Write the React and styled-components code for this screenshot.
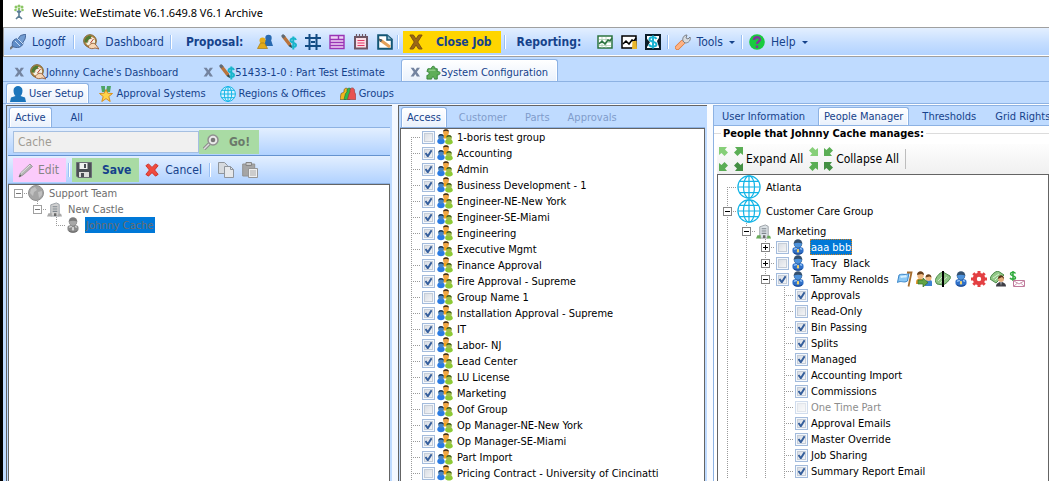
import React, { useState } from "react";
import styled, { createGlobalStyle, css } from "styled-components";

const GlobalStyle = createGlobalStyle`
  * {
    box-sizing: border-box;
  }
  html, body, #root {
    height: 100%;
    margin: 0;
  }
  body {
    overflow: hidden;
  }
  body, button, input {
    font-family: "DejaVu Sans Condensed", "DejaVu Sans", sans-serif;
    font-size: 11px;
  }
  button {
    border: none;
    background: none;
    padding: 0;
    color: inherit;
    cursor: pointer;
  }
  svg {
    display: block;
    flex: none;
  }
`;

const Window = styled.div`
  display: flex;
  flex-direction: column;
  height: 100vh;
  border-left: 3px solid #000;
  background: #bfdbff;
  color: #15428b;
  overflow: hidden;
`;

const TitleBar = styled.header`
  flex: none;
  display: flex;
  align-items: center;
  gap: 5px;
  height: 27px;
  padding: 0 0 3px 8px;
  background: #fff;
  color: #000;
  font-family: "Noto Sans", "Open Sans", sans-serif;
  font-size: 11px;
`;

const Toolbar = styled.nav`
  flex: none;
  display: flex;
  align-items: center;
  height: 30px;
  padding-left: 6px;
  border-top: 1px solid #a0a0a0;
  border-bottom: 1px solid #a0a0a0;
  border-left: 1px solid #a0a0a0;
  box-shadow: inset 0 -1px #fff;
  background: linear-gradient(#e3efff, #c4ddff 55%, #b1d2ff);
  white-space: nowrap;
`;

const ToolButton = styled.button`
  flex: none;
  display: flex;
  align-items: center;
  gap: 6px;
  height: 22px;
  margin-right: ${(p) => p.$after || 0}px;
  font-size: 12px;
`;

const CloseJob = styled(ToolButton)`
  gap: 13px;
  padding: 0 9px 0 6px;
  background: #ffd500;
  font-weight: bold;
`;

const Heading = styled.span`
  flex: none;
  width: ${(p) => p.$width}px;
  padding-left: 8px;
  font-size: 12px;
  font-weight: bold;
`;

const IconGroup = styled.div`
  display: flex;
  gap: 8px;
`;

const Separator = styled.span`
  flex: none;
  width: 2px;
  height: 14px;
  margin: 0 ${(p) => p.$gap || 6}px;
  border-left: 1px solid #9ac0f3;
  border-right: 1px solid #fff;
`;

const Caret = styled.span`
  border: 3px solid transparent;
  border-top-color: #15428b;
  border-bottom: none;
`;

const activeTab = css`
  border: 1px solid #8db2e3;
  border-bottom: none;
  border-radius: 3px 3px 0 0;
  box-shadow: inset 1px 1px #fff, inset -1px 0 #fff;
  background: linear-gradient(#fff, #e9f1fc);
`;

const TabStrip = styled.div`
  flex: none;
  display: flex;
  align-items: flex-end;
  gap: ${(p) => p.$gap || 7}px;
  height: ${(p) => p.$height}px;
  padding-left: ${(p) => p.$start || 0}px;
  border-bottom: 1px solid #8db2e3;
  background: #bfdbff;
  white-space: nowrap;
  overflow: hidden;
`;

const Tab = styled.button`
  flex: none;
  display: flex;
  align-items: center;
  gap: 4px;
  height: calc(100% - 1px);
  padding: 0 5px;
  border: 1px solid transparent;
  border-bottom: none;
  color: #15428b;
  ${(p) => p.$active && activeTab}
  &:disabled {
    color: #7f9ccb;
    cursor: default;
  }
`;

const WideTab = styled(Tab)`
  padding-left: 11px;
`;

const PageTab = styled(Tab)`
  gap: 3px;
  padding: 0 4px 0 3px;
`;

const DocTab = styled(Tab)`
  gap: 0;
  height: 22px;
  padding: 3px 9px 0 8px;
`;

const DocClose = styled.span`
  margin-right: 6px;
`;

const Body = styled.main`
  flex: 1;
  min-height: 0;
  display: grid;
  grid-template-columns: 386fr 309fr 336fr;
  gap: 6px;
  margin-left: 3px;
  padding-top: 1px;
  background: linear-gradient(90deg, #edf4ff, #fff);
`;

const Panel = styled.section`
  display: flex;
  flex-direction: column;
  min-width: 0;
  min-height: 0;
  padding: 0 2px 0 1px;
  border-top: 1px solid #646464;
  border-left: 1px solid #646464;
  background: #bfdbff;
  overflow: hidden;
`;

const PeoplePanel = styled(Panel)`
  border-top-color: #8db2e3;
  border-left-color: #8db2e3;
  padding: 0;
  background: #fff;
`;

const SearchBar = styled.form`
  flex: none;
  display: flex;
  align-items: center;
  height: 28px;
  padding-left: 5px;
  border-bottom: 1px solid #6593cf;
  background: linear-gradient(#e3efff, #b1d2ff);
`;

const SearchInput = styled.input`
  width: 186px;
  height: 22px;
  padding: 0 4px;
  border: 1px solid #a5bfe1;
  background: #f0f0f0;
  color: #a09c94;
  font-size: 12px;
`;

const GoButton = styled(ToolButton)`
  gap: 10px;
  width: 60px;
  height: 24px;
  padding-left: 4px;
  background: #a9dba4;
  color: #6b7a6b;
  font-weight: bold;
`;

const EditBar = styled(SearchBar).attrs({ as: "div" })`
  border-color: #8db2e3;
`;

const EditButton = styled(ToolButton)`
  gap: 4px;
  height: 24px;
  padding: 0 7px 0 5px;
  background: #fbcbfb;
  color: #858585;
`;

const SaveButton = styled(ToolButton)`
  gap: 10px;
  height: 24px;
  padding: 0 8px 0 4px;
  background: #a9dba4;
  font-weight: bold;
`;

const Tree = styled.ul`
  flex: 1;
  min-height: 0;
  margin: 0;
  padding: 0 0 0 ${(p) => p.$left || 0}px;
  border: 1px solid #646464;
  border-bottom: none;
  background: #fff;
  color: ${(p) => (p.$dim ? "#6d6d6d" : "#000")};
  list-style: none;
  overflow: hidden;
`;

const Row = styled.li`
  display: flex;
  align-items: center;
  height: ${(p) => (p.$tall ? 24 : 16)}px;
  white-space: pre;
`;

const dots = "#9a9a9a 0 1px, transparent 1px 2px";

// one 19px indent step; $kind picks which dotted guides it shows
const Guide = styled.span`
  flex: none;
  display: flex;
  align-items: center;
  width: 19px;
  height: 100%;
  padding-left: 5px;
  background-repeat: no-repeat;
  background-image: repeating-linear-gradient(${dots}),
    repeating-linear-gradient(90deg, ${dots});
  background-position: 9px ${(p) => (p.$kind === "first" ? "100%" : "0")}, 9px 50%;
  background-size: 1px
      ${(p) => ({ line: "100%", tee: "100%", end: "50%", first: "50%" })[p.$kind] || "0"},
    ${(p) => (["tee", "end", "first", "solo"].includes(p.$kind) ? "10px" : "0")} 1px;
`;

const Expander = styled.button`
  display: block;
  width: 9px;
  height: 9px;
  background: #fff;
`;

const Check = styled.input`
  appearance: none;
  flex: none;
  width: 13px;
  height: 13px;
  margin: 0 2px 0 1px;
  border: 1px solid #a3bbdc;
  box-shadow: inset 0 0 0 1px #f4f8fd, inset 0 0 0 2px #c5cdd8;
  background: linear-gradient(135deg, #d3d8e0, #fafafa);
  &:checked {
    background: url("data:image/svg+xml,%3Csvg xmlns='http://www.w3.org/2000/svg' width='11' height='11'%3E%3Cpath d='M2.5 5l2.3 3.2L8.6 2.2' fill='none' stroke='%23365f9c' stroke-width='2'/%3E%3C/svg%3E"),
      linear-gradient(135deg, #d3d8e0, #fafafa);
  }
  &:disabled {
    opacity: 0.5;
  }
`;

const NodeLabel = styled.label`
  display: flex;
  align-items: center;
  height: 16px;
  margin-left: ${(p) => p.$gap || 0}px;
  padding: 0 1px;
  ${(p) => p.$muted && "color: #8d8d8d;"}
  ${(p) =>
    p.$selected &&
    css`
      background: #0078d7;
      color: ${p.$selected};
    `}
`;

const Focused = styled(NodeLabel)`
  outline: 1px dotted #d08020;
  outline-offset: -1px;
`;

const Badges = styled.span`
  display: flex;
  gap: 3px;
  margin-left: 7px;
`;

const PeopleBox = styled.fieldset`
  flex: 1;
  min-width: 0;
  min-height: 0;
  display: flex;
  flex-direction: column;
  margin: 0;
  padding: 3px 0 0 3px;
  border: none;
  border-top: 1px solid #dcdcdc;
`;

const Legend = styled.legend`
  margin-left: 4px;
  padding: 0 2px;
  color: #000;
  font-weight: bold;
  line-height: 15px;
`;

const PeopleTools = styled.div`
  flex: none;
  display: flex;
  align-items: center;
  gap: 6px;
  height: 30px;
  padding-left: 2px;
  background: linear-gradient(#fdfdfd, #f0f0f0);
  color: #000;
`;

const PeopleTool = styled(ToolButton)`
  gap: 3px;
`;

const Divider = styled.span`
  width: 1px;
  height: 20px;
  background: #bdbdbd;
`;

/* icons */

const Svg = ({ size = 16, children, ...rest }) => (
  <svg width={size} height={size} viewBox="0 0 16 16" fill="none" aria-hidden="true" {...rest}>
    {children}
  </svg>
);

const LogoIcon = () => (
  <Svg>
    <g fill="#8cc665">
      <circle cx="8" cy="2" r="1.6" /><circle cx="5" cy="3" r="1.5" /><circle cx="11" cy="3" r="1.5" />
      <circle cx="4.5" cy="6" r="1.3" /><circle cx="11.5" cy="6" r="1.3" /><circle cx="8" cy="5" r="1.3" />
    </g>
    <path d="M8 6v7M8 9L6 7M8 9l2-2M8 12l-3 3M8 12l3 3" stroke="#5c7f96" strokeWidth="1.6" />
  </Svg>
);

const PlugIcon = () => (
  <Svg>
    <path d="M0 15l4-4" stroke="#777" strokeWidth="2" />
    <path d="M2.500 12.500c-1-5 1-7.500 5.500-8l5 5c-1 4-6 5-10.500 3z" fill="#5f8dc8" stroke="#48699b" />
    <path d="M8 5l2.500-3.500L16 0l-1 5-3 5z" fill="#739dd2" stroke="#48699b" />
    <path d="M5 7l5 5M7 4l6 6" stroke="#c6dcf5" />
  </Svg>
);

const GaugeIcon = () => (
  <Svg>
    <circle cx="7" cy="7" r="6.3" fill="#b98a4a" stroke="#7a5f2c" />
    <circle cx="7.5" cy="7.5" r="4.6" fill="#f5f2e2" />
    <path d="M1.500 8c0-4 3-7 7-6l-1 3c-2 0-3 2-3 4z" fill="#4e7b33" />
    <path d="M7.500 9l3-4M8 4v1M4.500 7h1" stroke="#b53629" />
    <path d="M5 13c2-4 6-5 8-2l3 4-4-1c-2 1-5 1-7-1z" fill="#f7d6b4" stroke="#8c4f28" strokeWidth=".8" />
  </Svg>
);

const TwoPeopleIcon = () => (
  <Svg>
    <circle cx="11.5" cy="4" r="3.2" fill="#2869b0" />
    <path d="M8 6h6l2 6H8z" fill="#2869b0" />
    <circle cx="5.5" cy="6.5" r="3" fill="#e3ab1a" />
    <path d="M3.500 9h4l3 5.500H.5z" fill="#e3ab1a" stroke="#a77a10" strokeWidth=".7" />
  </Svg>
);

const DollarPencilIcon = () => (
  <Svg>
    <path d="M15 6c-1-2.500-5.500-2-5.500.5 0 2.500 5.500 2 5.500 4.500s-5.500 2.500-6 0M12.300 2.500v13" stroke="#19b5cb" strokeWidth="2" />
    <path d="M2 2l7 9" stroke="#b9733c" strokeWidth="3.5" />
    <path d="M1 1l2.500 2.500" stroke="#5f6b78" strokeWidth="3" />
    <path d="M7.500 12l3.500 2-1-4z" fill="#444" />
  </Svg>
);

const HashIcon = () => (
  <Svg>
    <path d="M4.500 0v16M11.500 0v16M0 4h16M0 12h16M6 8h4" stroke="#124b83" strokeWidth="2" />
  </Svg>
);

const FormIcon = () => (
  <Svg>
    <path d="M1 1.500h14v13H1z" fill="#efd4f6" />
    <path d="M1 1.500h14v13H1zM1 5.500h14M1 8.500h14M1 11.500h14M9.500 2v4" stroke="#9a35b5" strokeWidth="1.4" />
  </Svg>
);

const NotepadIcon = () => (
  <Svg>
    <path d="M2 3h12v11.500H2z" fill="#fbdde5" stroke="#6e5664" strokeWidth="2" />
    <path d="M3.500 0v4M6.500 0v4M9.500 0v4M12.500 0v4" stroke="#6e5664" strokeWidth="1.2" />
    <path d="M4.500 6.500h7M4.500 9h7M4.500 11.500h7" stroke="#e13a66" strokeWidth="1.2" />
  </Svg>
);

const DocPencilIcon = () => (
  <Svg>
    <path d="M1.200 1.200H10l4.800 4.300v9.300H1.200z" fill="#fff" stroke="#135676" strokeWidth="2" />
    <path d="M10 1v5h5" fill="#8db9cf" stroke="#135676" strokeWidth="1.5" />
    <path d="M4 6.500l9 6.500" stroke="#e4a15a" strokeWidth="3" />
    <path d="M2 5l3 1-1.500 2z" fill="#347a99" stroke="#555" />
  </Svg>
);

const CloseXIcon = () => (
  <Svg width="14" preserveAspectRatio="none">
    <path d="M1 1h4l3 4 3-4h4l-5 7 5 7h-4l-3-4-3 4H1l5-7z" fill="#9a6817" stroke="#7a5010" />
  </Svg>
);

const ChartIcon = ({ color = "#000", bag }) => (
  <Svg>
    <path d="M1 2h14v12H1z" fill="#fff" stroke={color} strokeWidth="1.5" />
    {!bag && <path d="M2 5.500h12M2 8.500h12M2 11.500h12M5 3v11M9 3v11" stroke="#a6ccae" strokeWidth=".7" />}
    <path d="M2 10l3-3 3 3 3-4 2 1 2-3" stroke={color} strokeWidth="1.5" />
    {bag && <path d="M11.500 7h4l.500 8h-5z" fill="#e9b62b" />}
  </Svg>
);

const DollarBoxIcon = () => (
  <Svg>
    <path d="M1 1h14v14H1z" fill="#fff" stroke="#0b1d29" strokeWidth="2" />
    <path d="M2 5l3 3-3 5zM14 4l-2 3 2 6z" fill="#0b1d29" />
    <path d="M11.500 5c-1-2.300-7-2.300-7 .5 0 2.500 7 2 7 4.800 0 2.900-6.500 2.900-7.500 0M8 1.500v13" stroke="#1bb4d3" strokeWidth="2" />
  </Svg>
);

const WrenchIcon = () => (
  <Svg>
    <path d="M2.500 13.500l5-5" stroke="#e0762f" strokeWidth="5" strokeLinecap="round" />
    <path d="M2.500 13.500l5-5" stroke="#fdb285" strokeWidth="3.8" strokeLinecap="round" />
    <path d="M8 7c-1-3 1-6 4-6l-1 3 2 1 2-2c1 3-1 6-5 6z" fill="#d7dbe0" stroke="#7b8087" />
  </Svg>
);

const HelpIcon = () => (
  <Svg>
    <circle cx="8" cy="8" r="7.8" fill="#18cb3f" />
    <path d="M5 6c0-3.500 6-3.500 6-.5C11 7.500 8 7.500 8 10M8 11.500v2.500" stroke="#7f379b" strokeWidth="2.4" />
  </Svg>
);

const SmallXIcon = () => (
  <Svg size={10}>
    <path d="M1 1h5l2.500 4L11 1h5l-5 7 5 7h-5l-2.500-4L6 15H1l5-7z" fill="#7484a0" />
  </Svg>
);

const PuzzleIcon = () => (
  <Svg size={15}>
    <path d="M2 4h4c-1-3 4-4 3.500 0H12v3c4-1 4 4 0 3.500V15H9c0-3-3-3-3 0H1v-4c3 0 3-4 0-4z" fill="#5fae58" stroke="#35843a" />
    <path d="M3 5.500h7" stroke="#a9dba0" />
  </Svg>
);

const UserIcon = () => (
  <Svg>
    <path d="M3.500 4.500c0-6 9-6 9 0 0 3-1 4.500-2 5.500l4.500 1.500 1 4.500H0l1-4.500L5.500 10c-1-1-2-2.500-2-5.500z" fill="#1c75bb" />
  </Svg>
);

const MedalIcon = () => (
  <Svg>
    <path d="M3 0h4v6H4zM9 0h4l-1 6H8z" fill="#4fa568" />
    <path d="M8 3.500l1.700 3.700 4.800.3-3.700 3 1.400 5L8 12.600 3.800 15.500l1.400-5-3.700-3 4.800-.3z" fill="#ffd34a" stroke="#d98e1b" />
  </Svg>
);

const GlobeIcon = ({ size = 16, dim }) =>
  dim ? (
    <Svg size={size}>
      <circle cx="8" cy="8" r="7.5" fill="#a5a5a5" stroke="#8f8f8f" />
      <path d="M3 4l4-2 2 3-3 2-1 4-3-3zM10 7l4-1v4l-3 3zM7 12l2 2" fill="#c0c0c0" />
    </Svg>
  ) : (
    <Svg size={size} stroke="#12b4e6" strokeWidth={size > 16 ? 0.8 : 1}>
      <circle cx="8" cy="8" r="7.4" fill={size > 16 ? "#fff" : "#d9f2ff"} />
      <ellipse cx="8" cy="8" rx="3.7" ry="7.4" />
      <path d="M8 .6v14.800M.6 8h14.800M2 4.300h12M2 11.700h12" />
    </Svg>
  );

const GroupsIcon = () => (
  <Svg>
    <path d="M0 13.500l1-6 3-1.500c-1-5 5-5 4-1l-2 8.500z" fill="#f2b61d" stroke="#635020" strokeWidth=".6" />
    <path d="M4 13.500l1.500-6L7 6c-1-5 5-5 4.500-1L10 13.500z" fill="#2ebb4d" stroke="#24693a" strokeWidth=".6" />
    <path d="M7.500 13.500L9 8l1-2c-1-5.500 5.500-5.500 4.500 0l1 2 .3 5.500z" fill="#e85351" stroke="#933836" strokeWidth=".6" />
  </Svg>
);

const MagnifierIcon = () => (
  <Svg>
    <path d="M6 10l-5 5" stroke="#8d8d8d" strokeWidth="3.5" />
    <path d="M6 10l-5 5" stroke="#ddd" strokeWidth="1.5" />
    <circle cx="10" cy="6" r="5" fill="#e8e8e8" stroke="#909090" strokeWidth="1.5" />
    <circle cx="10" cy="6" r="2.3" fill="#777" />
  </Svg>
);

const PencilIcon = () => (
  <Svg>
    <path d="M1 15l1.500-4L12 2l2.500 2.500L5 13z" fill="#b5b5b5" stroke="#9c9c9c" />
    <path d="M3 11.500l9-8.500" stroke="#e4e4e4" />
    <path d="M1 15l1-2.500 1.500 1.500z" fill="#555" />
  </Svg>
);

const FloppyIcon = () => (
  <Svg>
    <path d="M.5.5h15v15H2l-1.500-1.500z" fill="#4b4f55" stroke="#6b6f75" />
    <path d="M3.500 1h8v6h-8z" fill="#f1f1f1" />
    <path d="M8 2h2v4H8z" fill="#4b4f55" />
    <path d="M3 10h10v5H3z" fill="#dedede" />
    <path d="M5 11h3v4H5z" fill="#4b4f55" />
  </Svg>
);

const RedXIcon = () => (
  <Svg size={14}>
    <path d="M1 3l3-2 4 4 4-4 3 2-4 5 4 5-3 2-4-4-4 4-3-2 4-5z" fill="#f04b3e" stroke="#ca2b22" />
  </Svg>
);

const CopyIcon = () => (
  <Svg>
    <path d="M.5.5h6l3 3v8h-9z" fill="#d6dade" stroke="#8f959c" />
    <path d="M6.500 4.500h6l3 3v8h-9z" fill="#e6e8ea" stroke="#8f959c" />
    <path d="M12.500 4.500v3h3" stroke="#8f959c" />
  </Svg>
);

const PasteIcon = () => (
  <Svg>
    <path d="M.7 2h12v12H.7z" fill="#a5a5a5" stroke="#929292" />
    <path d="M4 .5h5.500v3H4z" fill="#c9c9c9" stroke="#858585" />
    <path d="M6.500 6.500h9v9h-9z" fill="#eee" stroke="#959595" />
    <path d="M8 9h6M8 11h6M8 13h6" stroke="#aaa" />
  </Svg>
);

const BuildingIcon = ({ dim }) => (
  <Svg size={15}>
    <path d="M4 15V3l6-2 3 1.500V15z" fill={dim ? "#d0d0d0" : "#dbe1e5"} stroke="#9aa0a5" />
    <path d="M6 5h5M6 7.500h5M6 10h5" stroke="#7f878e" strokeWidth="1.2" />
    <path d="M7.500 12h2.500v3H7.500z" fill="#666" />
    <path d="M0 15.500l1.500-3.500H5v3.500zM12 12.500h3l1 3h-4z" fill={dim ? "#a9a9a9" : "#69ac5a"} />
  </Svg>
);

const PersonIcon = ({ dim }) => (
  <svg width="14" height="16" viewBox="0 0 14 16" fill="none" aria-hidden="true">
    <path d="M1.500 12c-.5-4 2-4 5.500-4s6 0 5.500 4c.5 5-11.500 5-11 0z" fill={dim ? "#8b8b8b" : "#2f6fc8"} />
    <path d="M3 10.500c1-.8 2-1 3-1M11 10.500c-1-.8-1.500-1-2-1" stroke={dim ? "#c9c9c9" : "#8fc0f5"} strokeWidth="1.4" />
    <path d="M3 14c2 1.500 6 1.500 8 0" stroke={dim ? "#666" : "#1c4180"} />
    <circle cx="7" cy="4.5" r="4.3" fill={dim ? "#7c7c7c" : "#33506f"} />
    <path d="M3 4.500c2.500-1 5.500-1 8 0 0 5.500-8 5.500-8 0z" fill={dim ? "#a8a8a8" : "#4d92dc"} />
    <path d="M6.200 10h1.600l.3 2.500L7 14l-1.100-1.500z" fill={dim ? "#d4d4d4" : "#f4d36b"} />
  </svg>
);

const TeamIcon = () => (
  <Svg>
    <path d="M5 8c0-4 8-4 8 0v1.500H5z" fill="#f5a51b" />
    <circle cx="9" cy="3.2" r="2.9" fill="#f0a645" />
    <path d="M6 2.500C6.500-.6 11.500-.6 12 2.500L9 1.800z" fill="#3a2715" />
    <path d="M.3 13c-.8-5 8-5 7.400 0-1 3-6.400 3-7.400 0z" fill="#2a7be3" />
    <circle cx="4" cy="8" r="2.8" fill="#4b86c4" />
    <path d="M1.200 7.500c.3-3.300 5.300-3.300 5.600 0L4 6.500z" fill="#1d3450" />
    <path d="M8.200 13.500c-1-5 7.800-5 7.600 0-1 2.800-6.600 2.800-7.600 0z" fill="#8cc934" />
    <circle cx="12" cy="9" r="2.8" fill="#9fc04c" />
    <path d="M9.200 8.500c.3-3.300 5.300-3.300 5.600 0L12 7.500z" fill="#465a20" />
  </Svg>
);

// each arrow fills a 9x9 corner of the 24px icon
const arrowPaths = {
  expand: "M0 0h8L6 2.500l3 3L5.500 9l-3-3L0 8z",
  collapse: "M9 9H1l2-2.500-3-3L3.500 0l3 3L9 1z",
};

const ArrowsIcon = ({ kind }) => (
  <svg width="24" height="24" viewBox="0 0 24 24" aria-hidden="true">
    <path d={arrowPaths[kind]} fill="#86cf78" />
    <path d={arrowPaths[kind]} fill="#5bae55" transform="translate(24 0) scale(-1 1)" />
    <path d={arrowPaths[kind]} fill="#5bae55" transform="translate(0 24) scale(1 -1)" />
    <path d={arrowPaths[kind]} fill="#438f43" transform="translate(24 24) scale(-1)" />
  </svg>
);

const FlagIcon = () => (
  <Svg>
    <path d="M2 4c4-2 6 1 10-2l-1.500 8c-4 2.500-6-1-10 1.500z" fill="#8ac8f6" stroke="#3b86c8" />
    <path d="M3.500 6c3-1 4 0 6-1" stroke="#d8f0ff" strokeWidth="2" />
    <path d="M10 1.500h4.500L11.500 15.500" stroke="#a66d2e" strokeWidth="1.8" />
  </Svg>
);

const HandoffIcon = () => (
  <Svg>
    <path d="M0 11c0-5 8-5 8 0v2H0z" fill="#e39a31" />
    <circle cx="4.5" cy="4.5" r="3.2" fill="#efb982" />
    <path d="M1 4c0-5 7-5 7 0L5.500 3z" fill="#68401c" />
    <path d="M9 15v-4c1-3 7-3 7 0v4z" fill="#3d83d1" />
    <circle cx="12.5" cy="7" r="3" fill="#efb982" />
    <path d="M9.500 6.500c0-4.500 6-4.500 6 0l-2-1z" fill="#68401c" />
    <path d="M2 9h5V7l5 4.500L7 16v-3H2z" fill="#62a344" stroke="#356d24" strokeWidth=".7" />
  </Svg>
);

const SplitIcon = () => (
  <Svg>
    <path d="M0 10c1-4 4-8 8-9l7 4c1 2 0 3-1 4-2 3-4 4-6 5l-6-1z" fill="#8ec485" stroke="#4b8a49" />
    <path d="M3 10l6-6M5 12l7-6" stroke="#d1e9c9" />
    <path d="M8 0v16" stroke="#000" strokeWidth="2" />
  </Svg>
);

const GearIcon = () => (
  <Svg>
    <circle cx="8" cy="8" r="4.2" stroke="#e34043" strokeWidth="4" />
    <path d="M8 0v3M8 13v3M0 8h3M13 8h3M2.300 2.300l2 2M11.700 11.700l2 2M13.700 2.300l-2 2M4.300 11.700l-2 2" stroke="#e34043" strokeWidth="3" />
  </Svg>
);

const MoneyPersonIcon = () => (
  <Svg>
    <path d="M0 8c1-4 4-7 8-8l6 4-8 8z" fill="#92c887" stroke="#4b8a49" />
    <path d="M3 7l6-4M5 9l3-3" stroke="#d8efd2" />
    <path d="M6 15.500c0-6 10-6 10 0z" fill="#3e3e46" />
    <circle cx="11" cy="8" r="3" fill="#e4ad7d" />
    <path d="M8 8c0-5 6-5 6 0l-2-2z" fill="#553217" />
    <path d="M10.500 11h1L11 15z" fill="#fff" />
  </Svg>
);

const MoneyMailIcon = () => (
  <Svg>
    <path d="M6.500 2.500c-1-2-5-1.500-5 .5 0 2 5 1.500 5 3.800 0 2-4.500 2-5.500 0M4 0v10" stroke="#2fab3d" strokeWidth="1.5" />
    <path d="M4.500 9.500h11v6h-11z" fill="#fff" stroke="#c07a9b" />
    <path d="M5 10l5 3 5-3M5 15l3.500-3M15 15l-3.500-3" stroke="#c07a9b" strokeWidth=".8" />
  </Svg>
);

const ExpandToggle = ({ open, dim, name, onClick }) => (
  <Expander type="button" aria-label={`Toggle ${name}`} onClick={onClick}>
    <svg width="9" height="9" shapeRendering="crispEdges" aria-hidden="true">
      <path d="M.5.5h8v8h-8z" fill="#fff" stroke={dim ? "#a0a0a0" : "#848484"} />
      <path d={open ? "M2 4.500h5" : "M2 4.500h5M4.500 2v5"} stroke={dim ? "#777" : "#000"} />
    </svg>
  </Expander>
);

const accessGroups = [
  ["1-boris test group", false],
  ["Accounting", true],
  ["Admin", true],
  ["Business Development - 1", true],
  ["Engineer-NE-New York", true],
  ["Engineer-SE-Miami", true],
  ["Engineering", true],
  ["Executive Mgmt", true],
  ["Finance Approval", true],
  ["Fire Approval - Supreme", true],
  ["Group Name 1", false],
  ["Installation Approval - Supreme", true],
  ["IT", true],
  ["Labor- NJ", true],
  ["Lead Center", true],
  ["LU License", true],
  ["Marketing", true],
  ["Oof Group", false],
  ["Op Manager-NE-New York", true],
  ["Op Manager-SE-Miami", true],
  ["Part Import", true],
  ["Pricing Contract - University of Cincinatti", false],
];

const permissions = [
  ["Approvals", true],
  ["Read-Only", false],
  ["Bin Passing", true],
  ["Splits", true],
  ["Managed", true],
  ["Accounting Import", true],
  ["Commissions", true],
  ["One Time Part", false, true],
  ["Approval Emails", true],
  ["Master Override", true],
  ["Job Sharing", true],
  ["Summary Report Email", true],
];

const MainToolbar = () => (
  <Toolbar>
    <ToolButton><PlugIcon />Logoff</ToolButton>
    <Separator $gap={8} />
    <ToolButton><GaugeIcon />Dashboard</ToolButton>
    <Separator />
    <Heading $width={79}>Proposal:</Heading>
    <IconGroup>
      <ToolButton aria-label="Contacts"><TwoPeopleIcon /></ToolButton>
      <ToolButton aria-label="Estimate"><DollarPencilIcon /></ToolButton>
      <ToolButton aria-label="Layout"><HashIcon /></ToolButton>
      <ToolButton aria-label="Form"><FormIcon /></ToolButton>
      <ToolButton aria-label="Notes"><NotepadIcon /></ToolButton>
      <ToolButton aria-label="Edit document"><DocPencilIcon /></ToolButton>
    </IconGroup>
    <Separator $gap={4} />
    <CloseJob><CloseXIcon />Close Job</CloseJob>
    <Separator $gap={3} />
    <Heading $width={88}>Reporting:</Heading>
    <IconGroup>
      <ToolButton aria-label="Chart"><ChartIcon color="#2c7440" /></ToolButton>
      <ToolButton aria-label="Sales chart"><ChartIcon bag /></ToolButton>
      <ToolButton aria-label="Revenue"><DollarBoxIcon /></ToolButton>
    </IconGroup>
    <Separator />
    <ToolButton><WrenchIcon />Tools<Caret /></ToolButton>
    <Separator />
    <ToolButton><HelpIcon />Help<Caret /></ToolButton>
  </Toolbar>
);

const UserPanel = () => {
  const [query, setQuery] = useState("Cache");

  return (
    <Panel>
      <TabStrip $height={22} $start={1}>
        <Tab $active>Active</Tab>
        <WideTab>All</WideTab>
      </TabStrip>
      <SearchBar onSubmit={(e) => e.preventDefault()}>
        <SearchInput
          aria-label="Search users"
          value={query}
          onChange={(e) => setQuery(e.target.value)}
        />
        <GoButton><MagnifierIcon />Go!</GoButton>
      </SearchBar>
      <EditBar>
        <EditButton><PencilIcon />Edit</EditButton>
        <Separator $gap={2} />
        <SaveButton $after={6}><FloppyIcon />Save</SaveButton>
        <ToolButton><RedXIcon />Cancel</ToolButton>
        <Separator $gap={7} />
        <IconGroup>
          <ToolButton aria-label="Copy"><CopyIcon /></ToolButton>
          <ToolButton aria-label="Paste"><PasteIcon /></ToolButton>
        </IconGroup>
      </EditBar>
      <Tree $dim>
        <Row>
          <Guide $kind="solo"><ExpandToggle open dim name="Support Team" /></Guide>
          <GlobeIcon dim />
          <NodeLabel as="span" $gap={4}>Support Team</NodeLabel>
        </Row>
        <Row>
          <Guide />
          <Guide $kind="end"><ExpandToggle open dim name="New Castle" /></Guide>
          <BuildingIcon dim />
          <NodeLabel as="span" $gap={5}>New Castle</NodeLabel>
        </Row>
        <Row>
          <Guide />
          <Guide />
          <Guide $kind="end" />
          <PersonIcon dim />
          <NodeLabel as="span" $gap={5} $selected="#6d6d6d">Johnny Cache</NodeLabel>
        </Row>
      </Tree>
    </Panel>
  );
};

const AccessPanel = () => (
  <Panel>
    <TabStrip $height={22} $start={1} $gap={6}>
      <Tab $active>Access</Tab>
      <Tab disabled>Customer</Tab>
      <Tab disabled>Parts</Tab>
      <Tab disabled>Approvals</Tab>
    </TabStrip>
    <Tree $left={1}>
      {accessGroups.map(([name, on], i) => (
        <Row key={name}>
          <Guide $kind={i === 0 ? "first" : "tee"} />
          <Check type="checkbox" id={`group-${i}`} defaultChecked={on} />
          <TeamIcon />
          <NodeLabel htmlFor={`group-${i}`} $gap={3}>{name}</NodeLabel>
        </Row>
      ))}
    </Tree>
  </Panel>
);

const ManagerPanel = () => {
  const [open, setOpen] = useState(true);

  return (
    <PeoplePanel>
      <TabStrip $height={20} $start={2}>
        <Tab>User Information</Tab>
        <Tab $active>People Manager</Tab>
        <Tab>Thresholds</Tab>
        <Tab>Grid Rights</Tab>
      </TabStrip>
      <PeopleBox>
        <Legend>People that Johnny Cache manages:</Legend>
        <PeopleTools>
          <PeopleTool><ArrowsIcon kind="expand" />Expand All</PeopleTool>
          <PeopleTool><ArrowsIcon kind="collapse" />Collapse All</PeopleTool>
          <Divider />
        </PeopleTools>
        <Tree>
          <Row $tall>
            <Guide $kind="first" />
            <GlobeIcon size={24} />
            <NodeLabel as="span" $gap={4}>Atlanta</NodeLabel>
          </Row>
          <Row $tall>
            <Guide $kind="tee"><ExpandToggle open name="Customer Care Group" /></Guide>
            <GlobeIcon size={24} />
            <NodeLabel as="span" $gap={4}>Customer Care Group</NodeLabel>
          </Row>
          <Row>
            <Guide $kind="line" />
            <Guide $kind="tee"><ExpandToggle open name="Marketing" /></Guide>
            <BuildingIcon />
            <NodeLabel as="span" $gap={5}>Marketing</NodeLabel>
          </Row>
          <Row>
            <Guide $kind="line" />
            <Guide $kind="line" />
            <Guide $kind="tee"><ExpandToggle name="aaa bbb" /></Guide>
            <Check type="checkbox" id="person-aaa" />
            <PersonIcon />
            <Focused htmlFor="person-aaa" $gap={5} $selected="#fff">aaa bbb</Focused>
          </Row>
          <Row>
            <Guide $kind="line" />
            <Guide $kind="line" />
            <Guide $kind="tee"><ExpandToggle name="Tracy Black" /></Guide>
            <Check type="checkbox" id="person-tracy" />
            <PersonIcon />
            <NodeLabel htmlFor="person-tracy" $gap={5}>{"Tracy  Black"}</NodeLabel>
          </Row>
          <Row>
            <Guide $kind="line" />
            <Guide $kind="line" />
            <Guide $kind="tee">
              <ExpandToggle open={open} name="Tammy Renolds" onClick={() => setOpen(!open)} />
            </Guide>
            <Check type="checkbox" id="person-tammy" defaultChecked />
            <PersonIcon />
            <NodeLabel htmlFor="person-tammy" $gap={5}>Tammy Renolds</NodeLabel>
            <Badges>
              <FlagIcon />
              <HandoffIcon />
              <SplitIcon />
              <PersonIcon />
              <GearIcon />
              <MoneyPersonIcon />
              <MoneyMailIcon />
            </Badges>
          </Row>
          {open &&
            permissions.map(([name, on, muted], i) => (
              <Row key={name}>
                <Guide $kind="line" />
                <Guide $kind="line" />
                <Guide $kind="line" />
                <Guide $kind="tee" />
                <Check type="checkbox" id={`perm-${i}`} defaultChecked={on} disabled={muted} />
                <NodeLabel htmlFor={`perm-${i}`} $muted={muted}>{name}</NodeLabel>
              </Row>
            ))}
        </Tree>
      </PeopleBox>
    </PeoplePanel>
  );
};

const App = () => {
  return (
    <Window>
      <GlobalStyle />
      <TitleBar>
        <LogoIcon />
        WeSuite: WeEstimate V6.1.649.8 V6.1 Archive
      </TitleBar>
      <MainToolbar />
      <TabStrip $height={25} $start={2} $gap={6}>
        <DocTab>
          <DocClose><SmallXIcon /></DocClose>
          <GaugeIcon />Johnny Cache's Dashboard
        </DocTab>
        <DocTab>
          <DocClose><SmallXIcon /></DocClose>
          <DollarPencilIcon />51433-1-0 : Part Test Estimate
        </DocTab>
        <DocTab $active>
          <DocClose><SmallXIcon /></DocClose>
          <PuzzleIcon />System Configuration
        </DocTab>
      </TabStrip>
      <TabStrip $height={22} $start={3} $gap={5}>
        <PageTab $active><UserIcon />User Setup</PageTab>
        <PageTab><MedalIcon />Approval Systems</PageTab>
        <PageTab><GlobeIcon />Regions &amp; Offices</PageTab>
        <PageTab><GroupsIcon />Groups</PageTab>
      </TabStrip>
      <Body>
        <UserPanel />
        <AccessPanel />
        <ManagerPanel />
      </Body>
    </Window>
  );
};

export default App;
